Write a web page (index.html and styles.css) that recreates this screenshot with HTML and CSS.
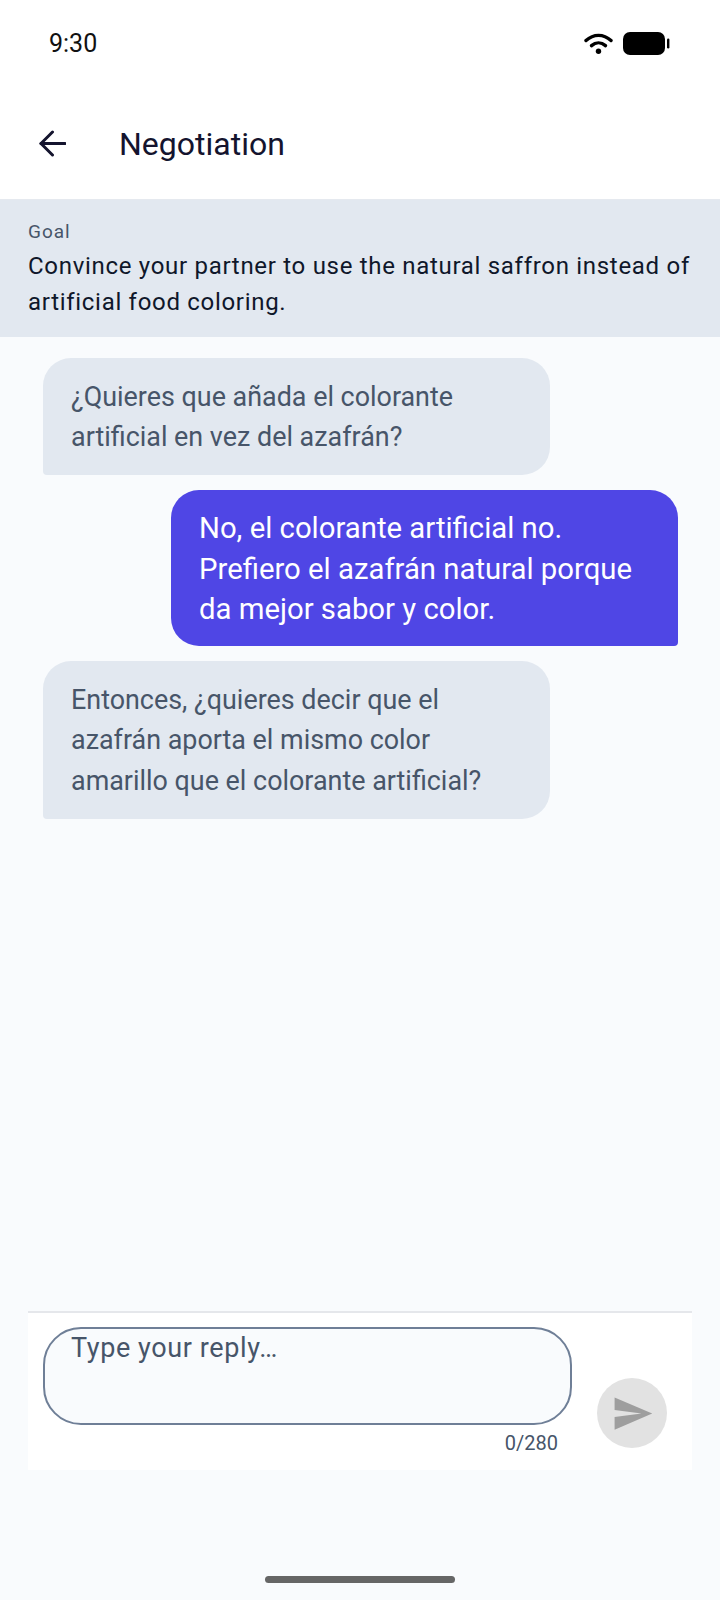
FILE: index.html
```html
<!DOCTYPE html>
<html lang="en">
<head>
  <meta charset="UTF-8" />
  <meta name="viewport" content="width=device-width, initial-scale=1.0" />
  <title>Negotiation</title>
  <link rel="stylesheet" href="styles.css">
</head>
<body>

  <div class="app">
    <div class="status-bar">
      <div class="status-time">9:30</div>
      <div class="status-icons">
        <svg class="wifi-icon" viewBox="0 0 29 21" fill="none" stroke="#000" stroke-width="3.4" stroke-linecap="round">
          <path d="M2 7.5C9.5 .6 19.5 .6 27 7.5" />
          <path d="M7.5 12.6C11.8 8.9 17.2 8.9 21.5 12.6" />
          <circle cx="14.5" cy="18.2" r="2.7" fill="#000" stroke="none" />
        </svg>
        <svg class="battery-icon" viewBox="0 0 47 23">
          <rect x="0" y="0" width="42" height="23" rx="7" fill="#000" />
          <rect x="44" y="6.5" width="2.4" height="10" rx="1.2" fill="#000" />
        </svg>
      </div>
    </div>

    <div class="header">
      <svg class="back-icon" viewBox="0 0 27 27" fill="none" stroke="#14142e" stroke-width="3" stroke-linecap="round" stroke-linejoin="round">
        <path d="M26 13.5H2" />
        <path d="M13.5 2L2 13.5L13.5 25" />
      </svg>
      <div class="header-title">Negotiation</div>
    </div>

    <div class="goal">
      <div class="goal-label">Goal</div>
      <div class="goal-text">Convince your partner to use the natural saffron instead of artificial food coloring.</div>
    </div>

    <div class="chat-list">
      <div class="bubble bubble-in">¿Quieres que añada el colorante artificial en vez del azafrán?</div>
      <div class="bubble bubble-out">No, el colorante artificial no.<br>Prefiero el azafrán natural porque<br>da mejor sabor y color.</div>
      <div class="bubble bubble-in">Entonces, ¿quieres decir que el azafrán aporta el mismo color amarillo que el colorante artificial?</div>
    </div>

    <div class="composer">
      <div class="reply-field">
        <textarea class="reply-box" placeholder="Type your reply…"></textarea>
        <div class="reply-count">0/280</div>
      </div>
      <button class="send-button" type="button">
        <svg class="send-icon" viewBox="0 0 24 24" fill="#9e9e9e">
          <path d="M2.01 21L23 12 2.01 3 2 10l15 2-15 2z" />
        </svg>
      </button>
    </div>

    <div class="nav-area">
      <div class="home-bar"></div>
    </div>
  </div>

</body>
</html>
```

FILE: styles.css
```css
body {
  margin: 0;
  padding: 0;
  font-family: Roboto, sans-serif;
  background-color: #f9fbfd;
}

.app {
  display: flex;
  flex-direction: column;
  height: 1600px;
}

.status-bar {
  display: flex;
  justify-content: space-between;
  align-items: center;
  height: 88px;
  padding: 0 50px 1px 49px;
  box-sizing: border-box;
  background-color: #fff;
}

.status-time {
  font-size: 25px;
  color: #111;
}

.status-icons {
  display: flex;
  align-items: center;
  gap: 10px;
}

.wifi-icon {
  width: 29px;
  height: 21px;
}

.battery-icon {
  width: 47px;
  height: 23px;
}

.header {
  display: flex;
  align-items: center;
  height: 112px;
  padding: 1px 0 0 39px;
  box-sizing: border-box;
  background-color: #fff;
  border-bottom: 1px solid #e5e9ef;
}

.back-icon {
  width: 27px;
  height: 27px;
  margin: 0 53px 2px 0;
}

.header-title {
  font-size: 32px;
  color: #14142e;
}

.goal {
  padding: 20px 28px 17px;
  background-color: #e2e8f0;
}

.goal-label {
  font-size: 19px;
  line-height: 24px;
  letter-spacing: 1px;
  color: #475569;
}

.goal-text {
  margin-top: 4px;
  font-size: 24px;
  line-height: 36px;
  letter-spacing: 0.7px;
  color: #0f172a;
}

.chat-list {
  flex: 1;
  display: flex;
  flex-direction: column;
  gap: 15px;
  padding: 21px 42px 0 43px;
}

.bubble {
  width: 507px;
  padding: 18.5px 28px 17.5px;
  box-sizing: border-box;
  font-size: 26.9px;
  line-height: 40.5px;
}

.bubble-in {
  align-self: flex-start;
  background-color: #e2e8f0;
  color: #475569;
  border-radius: 28px 28px 28px 4px;
}

.bubble-out {
  align-self: flex-end;
  padding: 18px 28px 16.5px;
  font-size: 29.3px;
  background-color: #4f46e5;
  color: #fff;
  border-radius: 28px 28px 4px 28px;
}

.composer {
  display: flex;
  align-items: flex-end;
  height: 159px;
  margin: 0 28px;
  padding: 14px 25px 22px 15px;
  box-sizing: border-box;
  background-color: #fff;
  border-top: 2px solid #e5e7eb;
}

.reply-field {
  flex: 1;
  align-self: flex-start;
}

.reply-box {
  display: block;
  width: 529px;
  height: 98px;
  padding: 0 26px;
  box-sizing: border-box;
  border: 2px solid #6f7f97;
  border-radius: 38px;
  background-color: #f9fbfd;
  font-family: Roboto, sans-serif;
  font-size: 27px;
  line-height: 38px;
  letter-spacing: 0.6px;
  resize: none;
  outline: none;
}

.reply-box::placeholder {
  color: #475569;
  opacity: 1;
}

.reply-count {
  width: 515px;
  margin-top: 6px;
  font-size: 20px;
  line-height: 24px;
  text-align: right;
  color: #475569;
}

.send-button {
  display: flex;
  align-items: center;
  justify-content: center;
  width: 70px;
  height: 70px;
  padding: 0;
  border: none;
  border-radius: 50%;
  background-color: #e2e2e2;
}

.send-icon {
  width: 43px;
  height: 43px;
}

.nav-area {
  height: 130px;
  padding-top: 106px;
  box-sizing: border-box;
}

.home-bar {
  width: 190px;
  height: 7px;
  margin: 0 auto;
  border-radius: 4px;
  background-color: #666;
}
```
